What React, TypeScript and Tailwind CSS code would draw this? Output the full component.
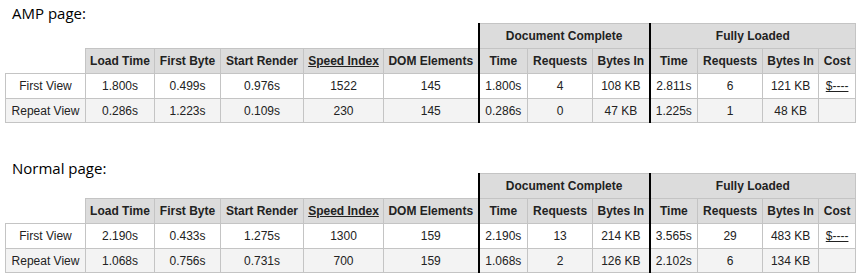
import React from "react";

type Row = { label: string; cells: string[]; cost?: boolean };

const widths = [80, 69, 66, 83, 80, 95, 49, 65, 57, 48, 65, 56, 37];

const headers = [
  "Load Time",
  "First Byte",
  "Start Render",
  "Speed Index",
  "DOM Elements",
  "Time",
  "Requests",
  "Bytes In",
  "Time",
  "Requests",
  "Bytes In",
  "Cost",
];

const thickCols = new Set([5, 8]);

function Table({ rows }: { rows: Row[] }) {
  const base =
    "border border-[#c4c4c4] px-1 text-center whitespace-nowrap overflow-hidden";
  return (
    <table
      className="ml-[5px] border-collapse table-fixed text-[12px] text-[#222]"
      style={{ width: 850, fontFamily: '"Liberation Sans", Arial, sans-serif' }}
    >
      <colgroup>
        {widths.map((w, i) => (
          <col key={i} style={{ width: w }} />
        ))}
      </colgroup>
      <tbody>
        <tr className="h-[25px]">
          <td colSpan={6} className="p-0"></td>
          <th
            colSpan={3}
            className={`${base} bg-[#dcdcdc] font-bold border-l-2 border-l-black`}
          >
            Document Complete
          </th>
          <th
            colSpan={4}
            className={`${base} bg-[#dcdcdc] font-bold border-l-2 border-l-black`}
          >
            Fully Loaded
          </th>
        </tr>
        <tr className="h-[25px]">
          <td className="p-0"></td>
          {headers.map((h, i) => (
            <th
              key={i}
              className={`${base} bg-[#dcdcdc] font-bold ${
                thickCols.has(i) ? "border-l-2 border-l-black" : ""
              }`}
            >
              {h === "Speed Index" ? <span className="underline">{h}</span> : h}
            </th>
          ))}
        </tr>
        {rows.map((r, ri) => (
          <tr
            key={ri}
            className={ri === 0 ? "h-[25px] bg-white" : "h-[24px] bg-[#f3f3f3]"}
          >
            <td className={base}>{r.label}</td>
            {r.cells.map((c, i) => (
              <td
                key={i}
                className={`${base} ${
                  thickCols.has(i) ? "border-l-2 border-l-black" : ""
                }`}
              >
                {c}
              </td>
            ))}
            <td className={base}>
              {r.cost ? <span className="underline">$----</span> : null}
            </td>
          </tr>
        ))}
      </tbody>
    </table>
  );
}

const amp: Row[] = [
  {
    label: "First View",
    cells: ["1.800s", "0.499s", "0.976s", "1522", "145", "1.800s", "4", "108 KB", "2.811s", "6", "121 KB"],
    cost: true,
  },
  {
    label: "Repeat View",
    cells: ["0.286s", "1.223s", "0.109s", "230", "145", "0.286s", "0", "47 KB", "1.225s", "1", "48 KB"],
  },
];

const normal: Row[] = [
  {
    label: "First View",
    cells: ["2.190s", "0.433s", "1.275s", "1300", "159", "2.190s", "13", "214 KB", "3.565s", "29", "483 KB"],
    cost: true,
  },
  {
    label: "Repeat View",
    cells: ["1.068s", "0.756s", "0.731s", "700", "159", "1.068s", "2", "126 KB", "2.102s", "6", "134 KB"],
  },
];

export default function App() {
  const title = "pl-[12px] text-[15px] leading-[20px] text-black";
  const ff = { fontFamily: '"Open Sans", sans-serif' };
  return (
    <div className="w-[860px] h-[278px] bg-white overflow-hidden">
      <div className={`${title} pt-[3px] h-[23px]`} style={ff}>
        AMP page:
      </div>
      <Table rows={amp} />
      <div className={`${title} mt-[35px] h-[15px]`} style={ff}>
        Normal page:
      </div>
      <Table rows={normal} />
    </div>
  );
}
